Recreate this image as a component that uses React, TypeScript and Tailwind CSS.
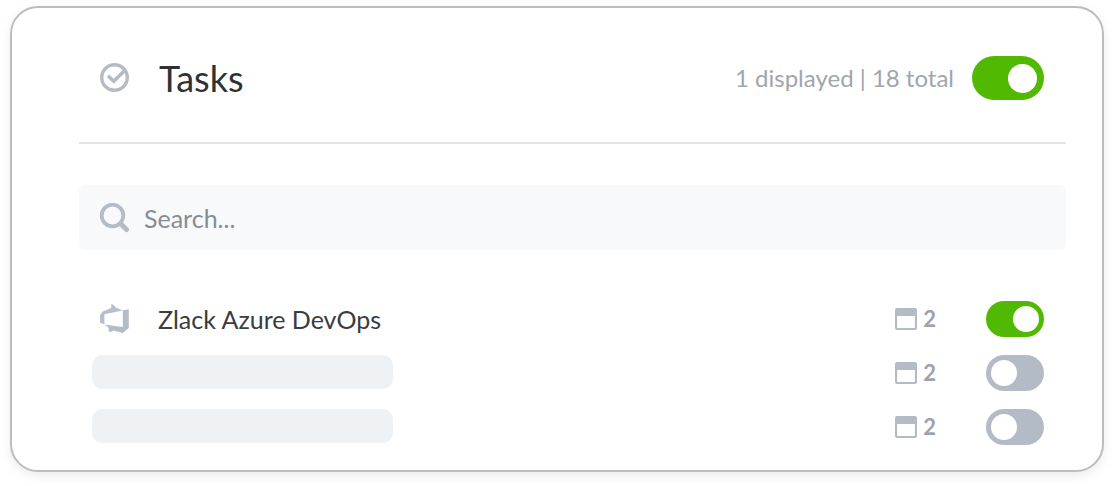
import React, { useState } from 'react';

interface TaskSource {
  id: string;
  name?: string;
  count: number;
  enabled: boolean;
}

const SOURCES: TaskSource[] = [
  { id: 'azure', name: 'Zlack Azure DevOps', count: 2, enabled: true },
  { id: 'second', count: 2, enabled: false },
  { id: 'third', count: 2, enabled: false },
];

const CheckCircleIcon = () => (
  <svg className="size-[30px] shrink-0 text-[#b4bbc4]" viewBox="0 0 30 30" fill="none" stroke="currentColor" aria-hidden="true">
    <circle cx="15.5" cy="14.5" r="12.8" strokeWidth="3.4" />
    <path d="M9 12.8l5.8 5.4L25 8.2" strokeWidth="3.6" />
  </svg>
);

const SearchIcon = () => (
  <svg className="size-[30px] shrink-0 text-[#b4bcc6]" viewBox="0 0 30 30" fill="none" stroke="currentColor" aria-hidden="true">
    <circle cx="13.5" cy="12.5" r="10.8" strokeWidth="3.8" />
    <path d="M21.5 20.5l6 6" strokeWidth="5" strokeLinecap="round" />
  </svg>
);

const AzureDevOpsIcon = () => (
  <svg className="size-[30px] shrink-0" viewBox="0 0 30 30" aria-hidden="true">
    <path fill="#b7c0ca" d="M1 11L4 7.2 12.2 4V0.3L14.5 0.8 16.8 3.6 23.8 6.6 5.4 10.2V20.2L1 18.8z" />
    <path fill="#b3bdc8" d="M23.8 6.2L29.8 5.2V24L23.8 29 14.5 26.6 11 28.2 9.6 26.8V23.8L5.4 20.4 23.8 23z" />
  </svg>
);

const CalendarIcon = () => (
  <svg className="size-[22px] shrink-0 text-[#b3bbc5]" viewBox="0 0 22 22" fill="none" aria-hidden="true">
    <rect x="1" y="1" width="20" height="20" rx="1.8" stroke="currentColor" strokeWidth="2.2" />
    <path d="M1 1.5h20V8H1z" fill="currentColor" />
  </svg>
);

interface ToggleProps {
  label: string;
  checked: boolean;
  onChange: () => void;
  large?: boolean;
}

const Toggle: React.FC<ToggleProps> = ({ label, checked, onChange, large }) => (
  <input
    type="checkbox"
    role="switch"
    aria-label={label}
    checked={checked}
    onChange={onChange}
    className={`flex shrink-0 cursor-pointer appearance-none items-center rounded-full bg-[#b3bcc6] before:rounded-full before:bg-white before:content-[''] checked:justify-end checked:bg-[#52b902] ${
      large ? 'h-11 w-[72px] px-[7px] before:size-[29px]' : 'h-9 w-[58px] px-[5px] before:size-[26px]'
    }`}
  />
);

const App: React.FC = () => {
  const [showTasks, setShowTasks] = useState(true);
  const [query, setQuery] = useState('');
  const [sources, setSources] = useState(SOURCES);

  const toggleSource = (id: string) =>
    setSources(sources.map((s) => (s.id === id ? { ...s, enabled: !s.enabled } : s)));

  return (
    <main className="bg-white pt-[6px] pr-[11px] pb-4 pl-[10px] font-['Lato',sans-serif]">
      <section className="rounded-[28px] border-2 border-[#bdbdbd] bg-white pr-9 pb-[25px] pl-[67px] shadow-[0_4px_12px_rgba(0,0,0,0.08)]">
        {/* Header */}
        <header className="flex items-center border-b-2 border-[#e4e4e5] pt-12 pr-[22px] pb-[42px] pl-5">
          <CheckCircleIcon />
          <h1 className="ml-[30px] text-4xl leading-10 text-[#303135]">Tasks</h1>
          <p className="mr-[18px] ml-auto text-2xl text-[#a0a5ae]">1 displayed | 18 total</p>
          <Toggle large label="Show tasks" checked={showTasks} onChange={() => setShowTasks(!showTasks)} />
        </header>

        {/* Search */}
        <label className="mt-[41px] flex h-[65px] items-center gap-[15px] rounded-md bg-[#f7f9fb] px-5">
          <SearchIcon />
          <input
            type="text"
            aria-label="Search"
            placeholder="Search..."
            value={query}
            onChange={(e) => setQuery(e.target.value)}
            className="min-w-0 flex-1 bg-transparent text-[25px] leading-8 text-[#3a3d42] outline-none placeholder:text-[#888d94]"
          />
        </label>

        {/* Sources */}
        <ul className="mt-[51px] flex flex-col gap-[18px] pr-[22px]">
          {sources.map((s) => (
            <li key={s.id} className="flex h-9 items-center">
              {s.name ? (
                <div className="flex items-center gap-[29px] pl-5">
                  <AzureDevOpsIcon />
                  <span className="text-[25px] leading-8 text-[#3a3c40]">{s.name}</span>
                </div>
              ) : (
                <div className="mb-[2px] ml-[13px] h-[34px] w-[301px] rounded-[10px] bg-[#eef2f5]" />
              )}
              <div className="mr-[50px] ml-auto flex items-center gap-[6px]">
                <CalendarIcon />
                <span className="text-[22px] leading-7 font-bold text-[#9ca3ad]">{s.count}</span>
              </div>
              <Toggle label={s.name ?? 'Task source'} checked={s.enabled} onChange={() => toggleSource(s.id)} />
            </li>
          ))}
        </ul>
      </section>
    </main>
  );
};

export default App;
